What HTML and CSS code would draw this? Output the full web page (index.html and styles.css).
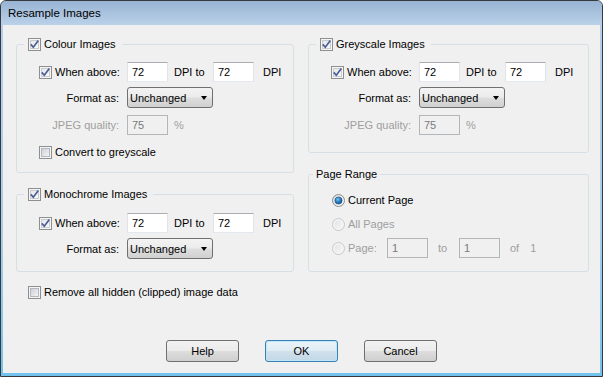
FILE: index.html
```html
<!DOCTYPE html>
<html lang="en">
<head>
  <meta charset="UTF-8" />
  <title>Resample Images</title>
  <link rel="stylesheet" href="styles.css">
</head>
<body>
  <div class="window">
    <div class="titlebar">Resample Images</div>
    <div class="client">
      <div class="groups">
        <div class="col">
          <!-- Colour -->
          <fieldset class="group colour">
            <legend>
              <svg class="cb" viewBox="0 0 13 13"><use href="#cb-on"/></svg>
              Colour Images
            </legend>
            <div class="inner">
              <div class="row">
                <span class="lead"><svg class="cb" viewBox="0 0 13 13"><use href="#cb-on"/></svg>When above:</span>
                <input class="num" type="text" value="72">
                <span class="mid">DPI to</span>
                <input class="num" type="text" value="72">
                <span class="tail">DPI</span>
              </div>
              <div class="row r2">
                <span class="lead right">Format as:</span>
                <div class="combo">Unchanged<span class="arrow"></span></div>
              </div>
              <div class="row r3 off">
                <span class="lead right">JPEG quality:</span>
                <input class="num" type="text" value="75" disabled>
                <span class="pct">%</span>
              </div>
              <div class="row r4">
                <span class="lead"><svg class="cb" viewBox="0 0 13 13"><use href="#cb-off"/></svg>Convert to greyscale</span>
              </div>
            </div>
          </fieldset>

          <!-- Monochrome -->
          <fieldset class="group mono">
            <legend>
              <svg class="cb" viewBox="0 0 13 13"><use href="#cb-on"/></svg>
              Monochrome Images
            </legend>
            <div class="inner">
              <div class="row">
                <span class="lead"><svg class="cb" viewBox="0 0 13 13"><use href="#cb-on"/></svg>When above:</span>
                <input class="num" type="text" value="72">
                <span class="mid">DPI to</span>
                <input class="num" type="text" value="72">
                <span class="tail">DPI</span>
              </div>
              <div class="row r2">
                <span class="lead right">Format as:</span>
                <div class="combo">Unchanged<span class="arrow"></span></div>
              </div>
            </div>
          </fieldset>
        </div>

        <div class="col">
          <!-- Greyscale -->
          <fieldset class="group grey">
            <legend>
              <svg class="cb" viewBox="0 0 13 13"><use href="#cb-on"/></svg>
              Greyscale Images
            </legend>
            <div class="inner">
              <div class="row">
                <span class="lead"><svg class="cb" viewBox="0 0 13 13"><use href="#cb-on"/></svg>When above:</span>
                <input class="num" type="text" value="72">
                <span class="mid">DPI to</span>
                <input class="num" type="text" value="72">
                <span class="tail">DPI</span>
              </div>
              <div class="row r2">
                <span class="lead right">Format as:</span>
                <div class="combo">Unchanged<span class="arrow"></span></div>
              </div>
              <div class="row r3 off">
                <span class="lead right">JPEG quality:</span>
                <input class="num" type="text" value="75" disabled>
                <span class="pct">%</span>
              </div>
            </div>
          </fieldset>

          <!-- Page range -->
          <fieldset class="group range">
            <legend>Page Range</legend>
            <div class="inner">
              <div class="row radio-row">
                <svg class="rb" viewBox="0 0 13 13"><use href="#rb-on"/></svg>Current Page
              </div>
              <div class="row radio-row off">
                <svg class="rb" viewBox="0 0 13 13"><use href="#rb-off"/></svg>All Pages
              </div>
              <div class="row page-row off">
                <span class="page-lead"><svg class="rb" viewBox="0 0 13 13"><use href="#rb-off"/></svg>Page:</span>
                <input class="num" type="text" value="1" disabled>
                <span class="to">to</span>
                <input class="num" type="text" value="1" disabled>
                <span class="of">of</span>
                <span class="total">1</span>
              </div>
            </div>
          </fieldset>
        </div>
      </div>

      <div class="row clip-row">
        <svg class="cb" viewBox="0 0 13 13"><use href="#cb-off"/></svg>Remove all hidden (clipped) image data
      </div>

      <div class="buttons">
        <button class="btn">Help</button>
        <button class="btn default">OK</button>
        <button class="btn">Cancel</button>
      </div>
    </div>
  </div>

  <!-- shared checkbox / radio drawings -->
  <svg class="defs" width="0" height="0">
    <defs>
      <linearGradient id="box-fill" x1="0" y1="0" x2="1" y2="1">
        <stop offset="0" stop-color="#cbcfd5"/>
        <stop offset="1" stop-color="#f6f6f6"/>
      </linearGradient>
      <linearGradient id="box-on" x1="0" y1="0" x2="1" y2="1">
        <stop offset="0" stop-color="#e4e6ea"/>
        <stop offset="1" stop-color="#fbfbfb"/>
      </linearGradient>
      <radialGradient id="dot" cx="0.4" cy="0.35" r="0.7">
        <stop offset="0" stop-color="#7ac2f0"/>
        <stop offset="0.5" stop-color="#2b81c4"/>
        <stop offset="1" stop-color="#12467a"/>
      </radialGradient>
      <linearGradient id="ring" x1="0" y1="0" x2="1" y2="1">
        <stop offset="0" stop-color="#d9dbde"/>
        <stop offset="1" stop-color="#fafafa"/>
      </linearGradient>
      <linearGradient id="ring-off" x1="0" y1="0" x2="1" y2="1">
        <stop offset="0" stop-color="#e3e3e3"/>
        <stop offset="1" stop-color="#f7f7f7"/>
      </linearGradient>
      <symbol id="cb-on" viewBox="0 0 13 13">
        <rect x="0.5" y="0.5" width="12" height="12" fill="#f5f5f5" stroke="#8e8f8f"/>
        <rect x="2.5" y="2.5" width="8" height="8" fill="url(#box-on)" stroke="#c9ccd1"/>
        <path d="M2.8 6.4 L5.3 9.2 L10.3 2.6" fill="none" stroke="#4a5d94" stroke-width="1.7"/>
      </symbol>
      <symbol id="cb-off" viewBox="0 0 13 13">
        <rect x="0.5" y="0.5" width="12" height="12" fill="#f5f5f5" stroke="#8e8f8f"/>
        <rect x="2.5" y="2.5" width="8" height="8" fill="url(#box-fill)" stroke="#b4b7bc"/>
      </symbol>
      <symbol id="rb-on" viewBox="0 0 13 13">
        <circle cx="6.5" cy="6.5" r="6" fill="url(#ring)" stroke="#8a8b8c"/>
        <circle cx="6.5" cy="6.5" r="3.6" fill="url(#dot)" stroke="#1d4f7c" stroke-width="0.6"/>
      </symbol>
      <symbol id="rb-off" viewBox="0 0 13 13">
        <circle cx="6.5" cy="6.5" r="6" fill="#f4f4f4" stroke="#c6c8ca"/>
        <circle cx="6.5" cy="6.5" r="4" fill="url(#ring-off)"/>
      </symbol>
    </defs>
  </svg>
</body>
</html>
```

FILE: styles.css
```css
body {
  margin: 0;
  background: #fff;
  font-family: 'Liberation Sans', Arial, sans-serif;
  font-size: 11px;
  color: #000;
}
.window {
  width: 603px;
  height: 377px;
  box-sizing: border-box;
  border: 1px solid #363a3e;
  border-radius: 6px 6px 0 0;
  background: linear-gradient(#9bb7d5 0, #b6cee7 24px, #a9cfea 60%, #71c3ee 100%);
  display: flex;
  flex-direction: column;
  overflow: hidden;
}
.titlebar {
  height: 24px;
  flex: none;
  line-height: 24px;
  padding-left: 7px;
  font-size: 11.5px;
  background: linear-gradient(#98b4d3, #bad1e9);
}
.client {
  flex: 1;
  margin: 0 2px 3px 2px;
  background: #f0f0f0;
  padding: 12px 0 0 0;
  display: flex;
  flex-direction: column;
}
.groups {
  display: grid;
  grid-template-columns: 278px 281px;
  column-gap: 14px;
  padding-left: 13px;
}
.col {
  display: flex;
  flex-direction: column;
  gap: 14px;
}
.group {
  margin: 0;
  padding: 0;
  border: 1px solid #d5dfe5;
  border-radius: 3px;
  box-sizing: border-box;
  min-width: 0;
}
.group legend {
  margin-left: 7px;
  padding: 0 6px 0 4px;
  height: 14px;
  line-height: 14px;
  display: flex;
  align-items: center;
  gap: 3px;
}
.colour { height: 136px; }
.grey { height: 116px; }
.mono { height: 85px; }
.range { height: 105px; }
.range legend {
  margin-left: 4px;
  padding: 0 3px;
}
.inner {
  padding: 11px 0 0 22px;
}
.mono .inner { padding-top: 12px; }
.range .inner { padding: 12px 0 0 23px; }

.cb, .rb {
  width: 13px;
  height: 13px;
  flex: none;
  display: block;
}
.row {
  display: flex;
  align-items: center;
  height: 20px;
  white-space: nowrap;
}
.row.r2 { height: 21px; margin-top: 5px; }
.row.r3 { margin-top: 7px; }
.row.r4 { height: 14px; margin-top: 10px; }
.lead {
  width: 88px;
  flex: none;
  display: flex;
  align-items: center;
  gap: 3px;
}
.lead.right {
  justify-content: flex-end;
  padding-right: 8px;
  box-sizing: border-box;
}
.num {
  width: 41px;
  height: 20px;
  box-sizing: border-box;
  margin: 0;
  padding: 0 0 0 4px;
  font: inherit;
  color: #000;
  background: #fff;
  border: 1px solid #e2e3ea;
  border-top-color: #abadb3;
  border-bottom-color: #e3e9ef;
  border-radius: 0;
  outline: none;
}
.num:disabled {
  background: #f0f0f0;
  color: #7a7a7a;
  border-color: #b3b6b9;
}
.mid { width: 39px; padding-left: 6px; flex: none; }
.tail { padding-left: 9px; }
.pct { padding-left: 6px; }
.off { color: #9e9e9e; }

.combo {
  width: 86px;
  height: 21px;
  box-sizing: border-box;
  border: 1px solid #707070;
  border-radius: 3px;
  background: linear-gradient(#f3f3f3 0%, #ebebeb 48%, #dedede 52%, #d0d0d0 100%);
  display: flex;
  align-items: center;
  justify-content: space-between;
  padding: 0 4px 0 2px;
}
.arrow {
  width: 0;
  height: 0;
  border-left: 3.5px solid transparent;
  border-right: 3.5px solid transparent;
  border-top: 4px solid #000;
  margin-right: 1px;
}

.radio-row {
  height: 14px;
  gap: 3px;
}
.radio-row + .radio-row { margin-top: 10px; }
.page-row { margin-top: 7px; }
.page-lead {
  width: 55px;
  flex: none;
  display: flex;
  align-items: center;
  gap: 3px;
}
.to { width: 31px; padding-left: 10px; box-sizing: border-box; flex: none; }
.of { padding-left: 10px; }
.total { padding-left: 11px; }

.clip-row {
  height: 14px;
  margin-top: 13px;
  padding-left: 25px;
  gap: 3px;
}

.buttons {
  margin-top: auto;
  padding-bottom: 11px;
  display: flex;
  justify-content: center;
  gap: 26px;
}
.btn {
  width: 73px;
  height: 22px;
  margin: 0;
  padding: 0;
  font: inherit;
  color: #000;
  border: 1px solid #707070;
  border-radius: 3px;
  background: linear-gradient(#f2f2f2 0%, #ebebeb 48%, #dddddd 52%, #cfcfcf 100%);
}
.btn.default {
  border-color: #3c7fb1;
  background: linear-gradient(#eaf3f9 0%, #dfebf3 48%, #d0e1ec 52%, #c2d8e6 100%);
  box-shadow: inset 0 0 0 1px #bfe6fb;
}
.defs {
  display: block;
  overflow: hidden;
}
```
